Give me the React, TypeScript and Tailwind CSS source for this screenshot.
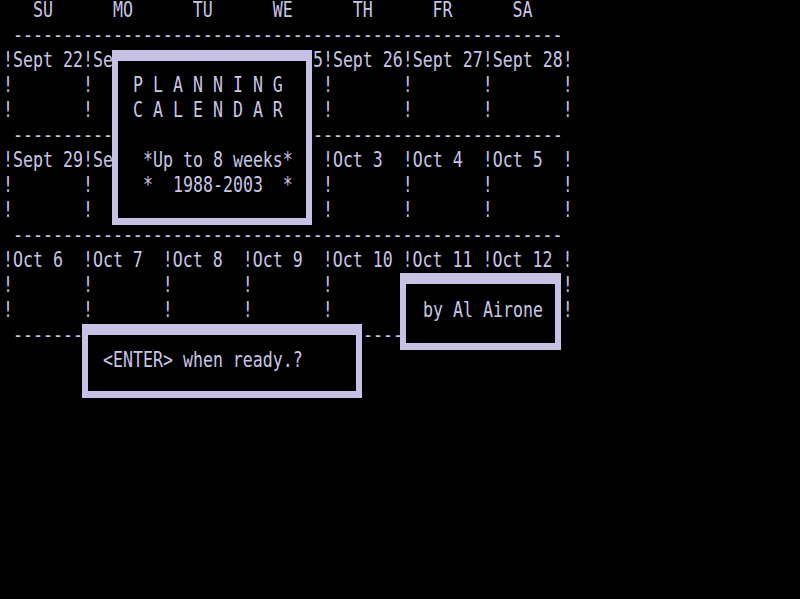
// '~' marks cells that lie under one of the boxes
const DASH = ' ' + '-'.repeat(55);
const BANG = '!       !       !       !       !       !       !       !';

const hide = (s: string, from: number, to: number) =>
  s.slice(0, from) + '~'.repeat(to - from + 1) + s.slice(to + 1);

const underPlanning = (s: string) => hide(s.padEnd(57, ' '), 11, 30);

const gridLines = [
  '   SU      MO      TU      WE      TH      FR      SA',
  DASH,
  underPlanning('!Sept 22!Sept 23!Sept 24!Sept 25!Sept 26!Sept 27!Sept 28!'),
  underPlanning(BANG),
  underPlanning(BANG),
  underPlanning(DASH),
  underPlanning('!Sept 29!Sept 30!Oct 1  !Oct 2  !Oct 3  !Oct 4  !Oct 5  !'),
  underPlanning(BANG),
  underPlanning(BANG),
  DASH,
  '!Oct 6  !Oct 7  !Oct 8  !Oct 9  !Oct 10 !Oct 11 !Oct 12 !',
  hide(BANG, 40, 55),
  hide(BANG, 40, 55),
  hide(hide(DASH.padEnd(57, ' '), 8, 35), 40, 55),
];

function Row({ text }: { text: string }) {
  const parts = text.split(/(~+)/).filter((p) => p.length > 0);
  return (
    <div className="h-[25px]">
      <div className="whitespace-pre leading-[18px] origin-top scale-y-[1.24]">
        {parts.map((p, i) =>
          p[0] === '~' ? (
            <span key={i} className="inline-block" style={{ width: p.length * 10 }} />
          ) : (
            <span key={i}>{p}</span>
          )
        )}
      </div>
    </div>
  );
}

function Box({ className, lines }: { className: string; lines: string[] }) {
  return (
    <div
      className={
        'absolute bg-black border-[#c6c2e6] border-x-[6px] border-t-[11px] border-b-[7px] ' + className
      }
    >
      {lines.map((l, i) => (
        <Row key={i} text={l} />
      ))}
    </div>
  );
}

export default function App() {
  return (
    <div
      className="relative h-[599px] w-[800px] overflow-hidden bg-black text-[16.6px] text-[#c9c5e5]"
      style={{ fontFamily: '"DejaVu Sans Mono", "Liberation Mono", monospace' }}
    >
      <div className="pl-[3px]">
        {gridLines.map((l, i) => (
          <Row key={i} text={l} />
        ))}
      </div>

      <Box
        className="left-[112px] top-[50px] h-[175px] w-[200px] pl-[15px] pt-[14px]"
        lines={['P L A N N I N G', 'C A L E N D A R', '', ' *Up to 8 weeks*', ' *  1988-2003  *']}
      />

      <Box
        className="left-[400px] top-[273px] h-[77px] w-[161px] pl-[17px] pt-[16px]"
        lines={['by Al Airone']}
      />

      <Box
        className="left-[82px] top-[324px] h-[74px] w-[280px] pl-[15px] pt-[15px]"
        lines={['<ENTER> when ready.?']}
      />
    </div>
  );
}
